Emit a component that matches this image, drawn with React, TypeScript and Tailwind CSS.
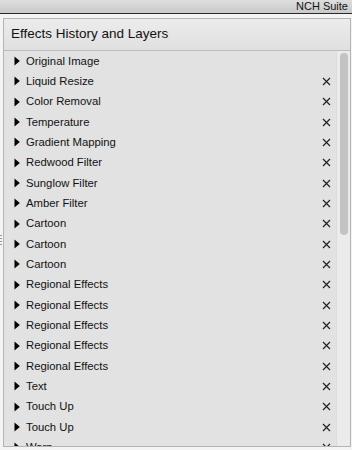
import React from "react";

const items: { name: string; x: boolean }[] = [
  { name: "Original Image", x: false },
  { name: "Liquid Resize", x: true },
  { name: "Color Removal", x: true },
  { name: "Temperature", x: true },
  { name: "Gradient Mapping", x: true },
  { name: "Redwood Filter", x: true },
  { name: "Sunglow Filter", x: true },
  { name: "Amber Filter", x: true },
  { name: "Cartoon", x: true },
  { name: "Cartoon", x: true },
  { name: "Cartoon", x: true },
  { name: "Regional Effects", x: true },
  { name: "Regional Effects", x: true },
  { name: "Regional Effects", x: true },
  { name: "Regional Effects", x: true },
  { name: "Regional Effects", x: true },
  { name: "Text", x: true },
  { name: "Touch Up", x: true },
  { name: "Touch Up", x: true },
  { name: "Warp", x: true },
];

function Tri() {
  return (
    <svg width="6" height="10" viewBox="0 0 6 10" className="shrink-0">
      <path d="M0.5 0.5 L5.8 5 L0.5 9.5 Z" fill="#000" />
    </svg>
  );
}

function XIcon() {
  return (
    <svg width="9" height="9" viewBox="0 0 9 9">
      <path d="M1 1 L8 8 M8 1 L1 8" stroke="#222" strokeWidth="1.2" />
    </svg>
  );
}

export default function App() {
  return (
    <div
      className="w-[352px] h-[450px] overflow-hidden bg-[#f4f4f4] flex flex-col"
      style={{ fontFamily: '"Liberation Sans", Arial, sans-serif' }}
    >
      <div className="h-[14px] shrink-0 bg-gradient-to-b from-[#dedede] to-[#c9c9c9] border-b border-[#2a2a2a] flex items-center justify-end pr-[4px]">
        <span className="text-[11px] leading-none text-[#111]">NCH Suite</span>
      </div>
      <div className="relative flex-1 pt-[4px] pl-[3px] pr-[1px] flex flex-col">
        <div className="absolute left-0 top-[221px] flex flex-col gap-[2px]">
          <div className="w-[2px] h-[1px] bg-[#999]" />
          <div className="w-[2px] h-[1px] bg-[#999]" />
          <div className="w-[2px] h-[1px] bg-[#999]" />
          <div className="w-[2px] h-[1px] bg-[#999]" />
        </div>
        <div className="h-[429px] border border-[#b4b4b4] flex flex-col overflow-hidden bg-[#e2e2e2]">
          <div className="h-[32px] shrink-0 bg-gradient-to-b from-[#ececec] to-[#e0e0e0] border-b border-[#bdbdbd] flex items-center pl-[7px]">
            <span className="text-[13.5px] text-[#111]">Effects History and Layers</span>
          </div>
          <div className="flex flex-1 overflow-hidden">
            <div className="flex-1 flex flex-col">
              {items.map((it, i) => (
                <div key={i} className="h-[20.33px] shrink-0 flex items-center pl-[10px] pr-[5px]">
                  <Tri />
                  <span className="ml-[6px] text-[11.3px] text-[#111] flex-1">{it.name}</span>
                  {it.x && <XIcon />}
                </div>
              ))}
            </div>
            <div className="w-[14px] shrink-0 bg-[#ebebeb] border-l border-[#dcdcdc] pt-[2px] flex justify-center">
              <div className="w-[8px] h-[182px] rounded-full bg-[#c3c3c3]" />
            </div>
          </div>
        </div>
      </div>
    </div>
  );
}
